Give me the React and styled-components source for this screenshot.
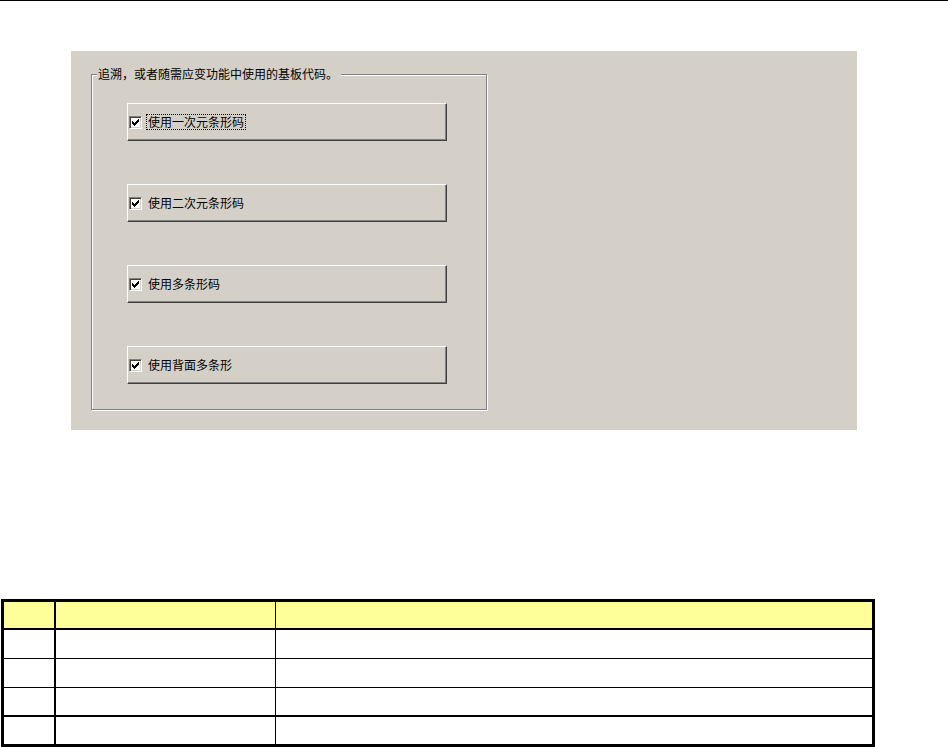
import React from "react";
import styled, { createGlobalStyle } from "styled-components";

const Global = createGlobalStyle`
  html, body { margin: 0; padding: 0; background: #ffffff; }
  body { font-family: "Noto Sans CJK SC", "Liberation Sans", sans-serif; }
`;

const Page = styled.div`
  width: 948px;
  height: 747px;
  overflow: hidden;
  display: flex;
  flex-direction: column;
`;

const TopRule = styled.div`
  height: 1px;
  background: #000;
  width: 100%;
`;

const Panel = styled.div`
  margin: 50px 0 0 71px;
  width: 786px;
  height: 379px;
  box-sizing: border-box;
  background: #d4d0c8;
  padding: 23px 0 0 20px;
`;

const GroupBox = styled.div`
  position: relative;
  box-sizing: border-box;
  width: 396px;
  height: 336px;
  border: 1px solid #808080;
  box-shadow: inset 1px 1px 0 #ffffff, 1px 1px 0 #ffffff;
  padding: 28px 0 0 35px;
  display: flex;
  flex-direction: column;
  gap: 43px;
`;

const Legend = styled.span`
  position: absolute;
  top: -8px;
  left: 5px;
  padding: 0 3px 0 1px;
  background: #d4d0c8;
  font-size: 12px;
  line-height: 14px;
  color: #000;
  white-space: nowrap;
`;

const OptionButton = styled.div`
  box-sizing: border-box;
  width: 320px;
  height: 38px;
  background: #d4d0c8;
  border-top: 1px solid #ffffff;
  border-left: 1px solid #ffffff;
  border-right: 1px solid #404040;
  border-bottom: 1px solid #404040;
  box-shadow: inset -1px -1px 0 #808080;
  display: flex;
  align-items: center;
  padding-left: 1px;
`;

const Box = styled.span`
  box-sizing: border-box;
  width: 13px;
  height: 13px;
  flex: none;
  background: #ffffff;
  border-top: 1px solid #808080;
  border-left: 1px solid #808080;
  border-right: 1px solid #ffffff;
  border-bottom: 1px solid #ffffff;
  box-shadow: inset 1px 1px 0 #404040, inset -1px -1px 0 #d4d0c8;
  display: flex;
  align-items: center;
  justify-content: center;
`;

const Label = styled.span`
  margin-left: 4px;
  padding: 0 1px;
  font-size: 12px;
  line-height: 14px;
  color: #000;
  border: 1px dotted ${(p) => (p.$focused ? "#000" : "transparent")};
  white-space: nowrap;
`;

const checkRows = [
  [6],
  [5, 6],
  [0, 4, 5, 6],
  [0, 1, 3, 4, 5],
  [0, 1, 2, 3, 4],
  [1, 2, 3],
  [2],
];

const CheckMark = () => (
  <svg width="7" height="7" viewBox="0 0 7 7" shapeRendering="crispEdges">
    {checkRows.map((cols, y) =>
      cols.map((x) => <rect key={`${x}-${y}`} x={x} y={y} width="1" height="1" fill="#000" />)
    )}
  </svg>
);

const Table = styled.table`
  margin: 169px 0 0 1px;
  width: 874px;
  border: 3px solid #000;
  border-spacing: 0;
  table-layout: fixed;
  box-sizing: border-box;
`;

const Cell = styled.td`
  padding: 0;
  box-sizing: content-box;
  height: ${(p) => p.$h}px;
  background: ${(p) => (p.$head ? "#ffff99" : "#ffffff")};
  border-bottom: ${(p) => p.$bb}px solid #000;
  border-right: ${(p) => p.$br}px solid #000;
`;

const options = [
  { text: "使用一次元条形码", focused: true },
  { text: "使用二次元条形码" },
  { text: "使用多条形码" },
  { text: "使用背面多条形" },
];

const rows = [
  { h: 26, bb: 2, head: true },
  { h: 28, bb: 1 },
  { h: 28, bb: 1 },
  { h: 27, bb: 2 },
  { h: 27, bb: 0 },
];

export default function App() {
  return (
    <>
      <Global />
      <Page>
        <TopRule />
        <Panel>
          <GroupBox>
            <Legend>追溯，或者随需应变功能中使用的基板代码。</Legend>
            {options.map((o) => (
              <OptionButton key={o.text}>
                <Box>
                  <CheckMark />
                </Box>
                <Label $focused={o.focused}>{o.text}</Label>
              </OptionButton>
            ))}
          </GroupBox>
        </Panel>
        <Table>
          <colgroup>
            <col style={{ width: 52 }} />
            <col style={{ width: 220 }} />
            <col style={{ width: 596 }} />
          </colgroup>
          <tbody>
            {rows.map((r, i) => (
              <tr key={i}>
                <Cell $h={r.h} $bb={r.bb} $br={2} $head={r.head} />
                <Cell $h={r.h} $bb={r.bb} $br={1} $head={r.head} />
                <Cell $h={r.h} $bb={r.bb} $br={0} $head={r.head} />
              </tr>
            ))}
          </tbody>
        </Table>
      </Page>
    </>
  );
}
